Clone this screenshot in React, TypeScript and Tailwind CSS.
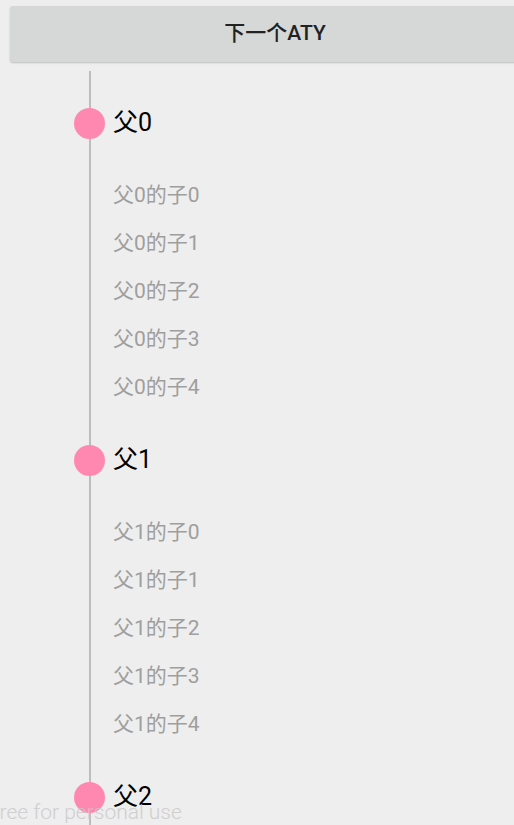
const groups = [0, 1, 2];
const children = [0, 1, 2, 3, 4];

export default function App() {
  return (
    <div className="relative w-[514px] h-[825px] overflow-hidden bg-[#eeeeee] font-['Roboto','Noto_Sans_CJK_SC',sans-serif]">
      {/* top button, runs past the right edge */}
      <div className="pt-[6px] pl-[10px]">
        <button className="flex h-[56px] w-[530px] items-center justify-center rounded-[3px] bg-[#d6d7d7] text-[21px] font-medium text-[#222222] shadow-[0_1px_2px_rgba(0,0,0,0.2)]">
          下一个ATY
        </button>
      </div>

      {/* timeline */}
      <div className="relative mt-[37px]">
        <div className="absolute left-[89px] top-[-28px] h-[900px] w-[2px] bg-[#bdbdbd]" />
        {groups.map((g) => (
          <div key={g} className="pb-[24px]">
            <div className="relative flex h-[48px] items-center">
              <div className="ml-[74px] h-[31px] w-[31px] rounded-full bg-[#ff88b0]" />
              <span className="ml-[8px] text-[25px] text-black">父{g}</span>
            </div>
            <div className="mt-[25px]">
              {children.map((c) => (
                <div key={c} className="flex h-[48px] items-center pl-[113px] text-[21px] text-[#9e9e9e]">
                  父{g}的子{c}
                </div>
              ))}
            </div>
          </div>
        ))}
      </div>

      {/* watermark */}
      <div className="pointer-events-none absolute bottom-[-3px] left-[-12px] text-[21px] font-light text-[#c8c8c8] opacity-80">
        Free for personal use
      </div>
    </div>
  );
}
